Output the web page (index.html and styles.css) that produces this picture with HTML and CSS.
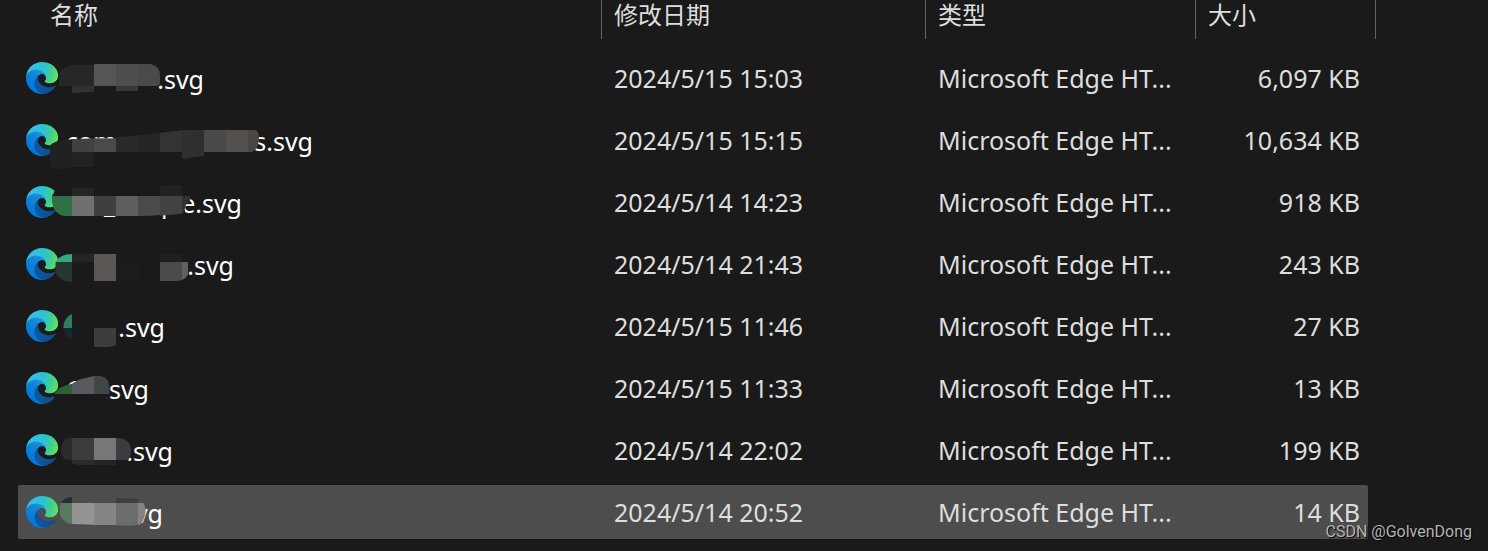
FILE: index.html
```html
<!DOCTYPE html>
<html lang="zh-CN">
<head>
<meta charset="utf-8">
<meta name="viewport" content="width=device-width, initial-scale=1">
<title>文件列表</title>
<link rel="stylesheet" href="styles.css">
</head>
<body>
<svg class="defs" aria-hidden="true">
  <defs>
    <linearGradient id="deep" gradientUnits="userSpaceOnUse" x1="60" y1="180" x2="236" y2="180"><stop offset="0" stop-color="#0c59a4"/><stop offset="1" stop-color="#114a8b"/></linearGradient>
    <linearGradient id="blue" gradientUnits="userSpaceOnUse" x1="150" y1="70" x2="45" y2="220"><stop offset="0" stop-color="#1b9de2"/><stop offset=".4" stop-color="#1484d4"/><stop offset="1" stop-color="#0078db"/></linearGradient>
    <radialGradient id="green" gradientUnits="userSpaceOnUse" cx="25" cy="45" r="245"><stop offset="0" stop-color="#35bdf1"/><stop offset=".5" stop-color="#2dc3cf"/><stop offset=".75" stop-color="#40cf91"/><stop offset="1" stop-color="#69e64e"/></radialGradient>
    <symbol id="edge" viewBox="0 0 256 256">
      <path fill="url(#deep)" d="M231 190.5c-3.4 1.8-6.9 3.4-10.5 4.7a101.5 101.5 0 01-35.9 6.4c-47.3 0-88.5-32.5-88.5-74.3 0-11.4 6.4-21.9 16.7-27.3-42.8 1.8-53.8 46.4-53.8 72.5 0 73.9 68.1 81.4 82.8 81.4 7.9 0 19.8-2.3 27-4.6l1.3-.4a128.3 128.3 0 0066.6-52.8 4 4 0 00-5.7-5.6z"/>
      <path fill="url(#blue)" d="M105.7 241.4a79.2 79.2 0 01-22.7-21.3 80.7 80.7 0 0129.5-120c3.2-1.5 8.5-4.1 15.6-4 10.1.1 19.7 4.9 25.7 13a32.3 32.3 0 016.3 18.7c0-.2 24.5-79.6-80-79.6-43.9 0-80 41.7-80 78.2a130.2 130.2 0 0012.1 56 128 128 0 00156.4 67.1 75.5 75.5 0 01-62.8-8z"/>
      <path fill="url(#green)" d="M152.3 148.9c-.8 1-3.3 2.5-3.3 5.7 0 2.6 1.7 5.2 4.8 7.3 14.5 10.1 41.9 8.8 42 8.8a60.2 60.2 0 0030.6-8.5A62 62 0 00257 108.6c.3-22.4-8-37.3-11.3-44C224.3 22.9 178.3 0 128.3 0A128 128 0 00.3 126.2c.5-36.5 36.8-66 80-66 3.5 0 23.5.3 42 10.1 16.3 8.6 24.9 18.9 30.8 29.2 6.2 10.7 7.3 24.1 7.3 29.5 0 5.3-2.7 13.3-8.1 19.9z"/>
    </symbol>
  </defs>
</svg>
<main class="explorer">
<table class="files">
  <colgroup><col><col class="col-date"><col class="col-type"><col class="col-size"></colgroup>
  <thead>
    <tr>
      <th scope="col"><div class="head head-name">名称</div></th>
      <th scope="col"><div class="head">修改日期</div></th>
      <th scope="col"><div class="head">类型</div></th>
      <th scope="col"><div class="head head-size">大小</div></th>
    </tr>
  </thead>
  <tbody>
    <tr>
      <td><div class="file"><svg class="icon"><use href="#edge"/></svg><span class="label w138"><span>.svg</span></span>
        <svg class="mosaic" viewBox="24 3 960 162" aria-hidden="true">
          <path fill="#262728" d="M147 108V76Q155 44 200 44H252V108z"/><path fill="#545557" d="M252 42h66v66h-66z"/><path fill="#4e4e4e" d="M318 42h66v66h-66z"/><path fill="#4a4a48" d="M384 42h38Q450 48 450 78V95Q450 106 440 108H384z"/><path fill="#333230" d="M186 108h66v17l-66 4z"/><path fill="#383838" d="M318 108h66v15h-66z"/>
        </svg></div></td>
      <td>2024/5/15 15:03</td><td>Microsoft Edge HT...</td><td class="size">6,097 KB</td>
    </tr>
    <tr>
      <td><div class="file"><svg class="icon"><use href="#edge"/></svg><span class="label w247"><span>com</span><span>s.svg</span></span>
        <svg class="mosaic" viewBox="24 9 960 162" aria-hidden="true">
          <path fill="#1f2123" d="M120 165V110Q124 92 186 88V175Q125 182 120 165z"/><path fill="#222222" d="M186 126h66v45h-66z"/><path fill="#404143" d="M186 88l66-3v41h-66z"/><path fill="#484a4b" d="M252 85h66v41h-66z"/><path fill="#292929" d="M318 82l66-6v50h-66z"/><path fill="#252525" d="M384 76l66-8v58h-66z"/><path fill="#353331" d="M450 68l66-7v65h-66z"/><path fill="#2e2f30" d="M516 61l20-1h46v78l-66 9z"/><path fill="#47494b" d="M582 60h66v66h-66z"/><path fill="#54504e" d="M648 60h66v66h-66z"/><path fill="#4a4643" d="M714 60h20Q747 62 747 82Q747 118 724 126H714z"/>
        </svg></div></td>
      <td>2024/5/15 15:15</td><td>Microsoft Edge HT...</td><td class="size">10,634 KB</td>
    </tr>
    <tr>
      <td><div class="file"><svg class="icon"><use href="#edge"/></svg><span class="label w176 partial"><span>_</span><span class="apart">p</span><span>e.svg</span></span>
        <svg class="mosaic" viewBox="24 9 960 162" aria-hidden="true">
          <path fill="#1a1a1a" d="M136 54L126 72V84L150 74V54z"/><path fill="#2e7148" d="M126 72h60v60h-22Q132 128 126 90z"/><path fill="#252525" d="M186 48h66v24h-66z"/><path fill="#70706f" d="M186 72h66v60h-66z"/><path fill="#403f3e" d="M252 72h66v60h-66z"/><path fill="#5d5e60" d="M318 72h66v60h-66z"/><path fill="#4a4a4a" d="M384 72h66v57q-30 3-66 3z"/><path fill="#212221" d="M450 43q30-4 66-4v33h-66z"/><path fill="#424242" d="M450 72h66v53l-66 6z"/><path fill="#323132" d="M516 72h24v16Q520 98 526 120L516 123z"/>
        </svg></div></td>
      <td>2024/5/14 14:23</td><td>Microsoft Edge HT...</td><td class="size">918 KB</td>
    </tr>
    <tr>
      <td><div class="file"><svg class="icon"><use href="#edge"/></svg><span class="label w168"><span>.svg</span></span>
        <svg class="mosaic" viewBox="24 9 960 162" aria-hidden="true">
          <path fill="#3aa580" d="M186 60v24h-49Q150 60 186 60z"/><path fill="#263730" d="M137 84h49v60Q144 142 136 110z"/><path fill="#272423" d="M186 60h66v24h-66z"/><path fill="#5a5754" d="M252 60h66v81h-66z"/><path fill="#1c1c1c" d="M318 84h66v57h-66z"/><path fill="#1e1f20" d="M450 60h66v24h-66z"/><path fill="#4b4b4c" d="M450 84h66v54q-9 3-18 3h-48z"/><path fill="#655f5b" d="M516 84h18v38q-5 10-18 16z"/>
        </svg></div></td>
      <td>2024/5/14 21:43</td><td>Microsoft Edge HT...</td><td class="size">243 KB</td>
    </tr>
    <tr>
      <td><div class="file"><svg class="icon"><use href="#edge"/></svg><span class="label w99"><span>.svg</span></span>
        <svg class="mosaic" viewBox="24 9 960 162" aria-hidden="true">
          <path fill="#317b61" d="M186 54v42h-26Q161 64 186 54z"/><path fill="#192632" d="M160 96h26v36Q162 124 160 96z"/><path fill="#3d3d3d" d="M252 96h66v52l-20 5h-46z"/>
        </svg></div></td>
      <td>2024/5/15 11:46</td><td>Microsoft Edge HT...</td><td class="size">27 KB</td>
    </tr>
    <tr>
      <td><div class="file"><svg class="icon"><use href="#edge"/></svg><span class="label w83"><span>C</span><span>.svg</span></span>
        <svg class="mosaic" viewBox="24 9 960 162" aria-hidden="true">
          <path fill="#1a1a1a" d="M132 107h166v7l-12 12H132z"/><path fill="#2d6036" d="M132 108Q146 84 186 77v31z"/><path fill="#575b5e" d="M186 77L206 65L252 54v54h-66z"/><path fill="#424648" d="M252 54h20Q298 60 298 88v20h-46z"/>
        </svg></div></td>
      <td>2024/5/15 11:33</td><td>Microsoft Edge HT...</td><td class="size">13 KB</td>
    </tr>
    <tr>
      <td><div class="file"><svg class="icon"><use href="#edge"/></svg><span class="label w107"><span>.svg</span></span>
        <svg class="mosaic" viewBox="24 9 960 162" aria-hidden="true">
          <path fill="#2a2a2b" d="M186 51v69h-14Q153 114 153 90Q153 55 186 51z"/><path fill="#3c3c3d" d="M186 54h66v66h-66z"/><path fill="#777775" d="M252 54h66v66h-66z"/><path fill="#3b3c3f" d="M318 54h10Q363 60 363 92Q363 112 354 120h-36z"/><path fill="#2a2b2b" d="M186 120h66v15h-38q-18 0-28-5z"/><path fill="#252525" d="M252 120h66v15h-66z"/>
        </svg></div></td>
      <td>2024/5/14 22:02</td><td>Microsoft Edge HT...</td><td class="size">199 KB</td>
    </tr>
    <tr class="selected" aria-selected="true">
      <td><div class="file"><svg class="icon"><use href="#edge"/></svg><span class="label w97"><span>.svg</span></span>
        <svg class="mosaic" viewBox="24 15 960 162" aria-hidden="true">
          <path fill="#2c2d2f" d="M186 51v18h-34Q162 51 186 51z"/><path fill="#587a60" d="M152 69h34v63h-4Q154 126 149 100V80z"/><path fill="#969492" d="M186 69h66v65l-66-2z"/><path fill="#868583" d="M252 69h66v66h-66z"/><path fill="#3d3e3e" d="M318 54l66 2v13h-66z"/><path fill="#6c6e6e" d="M318 69h66v66q-30 5-66 0z"/><path fill="#858180" d="M384 69h16Q414 90 400 120L394 132L384 135z"/>
        </svg></div></td>
      <td>2024/5/14 20:52</td><td>Microsoft Edge HT...</td><td class="size">14 KB</td>
    </tr>
  </tbody>
</table>
<div class="watermark">CSDN @GolvenDong</div>
</main>
</body>
</html>
```

FILE: styles.css
```css
* { box-sizing: border-box; }

body {
  margin: 0;
  background: #1a1a1a;
  color: #dedede;
  font-family: "Noto Sans", "Noto Sans CJK SC", sans-serif;
  font-size: 25px;
  line-height: 32px;
}

.defs { position: absolute; width: 0; height: 0; }

.explorer {
  position: relative;
  padding: 0 120px 4px 18px;
  overflow: hidden;
}

.files {
  width: 100%;
  margin-top: -8px;
  table-layout: fixed;
  border-collapse: separate;
  border-spacing: 0 8px;
  white-space: nowrap;
}

.col-date { width: 324px; }
.col-type { width: 270px; }
.col-size { width: 172px; }

th {
  height: 43px;
  padding: 0;
  vertical-align: top;
  text-align: left;
  font-weight: 400;
}

.head {
  height: 39px;
  padding-left: 12px;
  border-right: 1px solid #636363;
  font-family: "Noto Sans CJK SC", sans-serif;
  font-size: 24px;
  line-height: 28px;
}

.head-name { padding-left: 32px; }
.head-size { margin-right: -8px; }

td {
  height: 54px;
  padding: 0 0 0 12px;
  vertical-align: middle;
}

td:first-child { padding: 0; }

td.size {
  padding-right: 8px;
  text-align: right;
}

.file {
  position: relative;
  display: flex;
  align-items: center;
  gap: 8px;
  height: 54px;
  padding-left: 8px;
  color: #ffffff;
}

.icon { width: 32px; height: 32px; }

.label {
  display: flex;
  padding-top: 2px;
}

.label > :last-child { margin-left: auto; }

.w83 { width: 83px; }
.w97 { width: 97px; }
.w99 { width: 99px; }
.w107 { width: 107px; }
.w138 { width: 138px; }
.w168 { width: 168px; }
.w176 { width: 176px; }
.w247 { width: 247px; }

.partial { padding-left: 38px; }
.apart { margin-left: 46px; }

.mosaic {
  position: absolute;
  top: 0;
  left: 0;
  width: 320px;
  height: 54px;
  overflow: visible;
}

.selected td { background: #4d4d4d; }
.selected td:first-child { border-radius: 2px 0 0 2px; }
.selected td:last-child { border-radius: 0 2px 2px 0; }

.watermark {
  position: absolute;
  right: 16px;
  bottom: 8px;
  color: #b4b4b4;
  font-family: Roboto, sans-serif;
  font-size: 16px;
  line-height: 22px;
  text-shadow: 1px 1px 1px #000000;
}
```
